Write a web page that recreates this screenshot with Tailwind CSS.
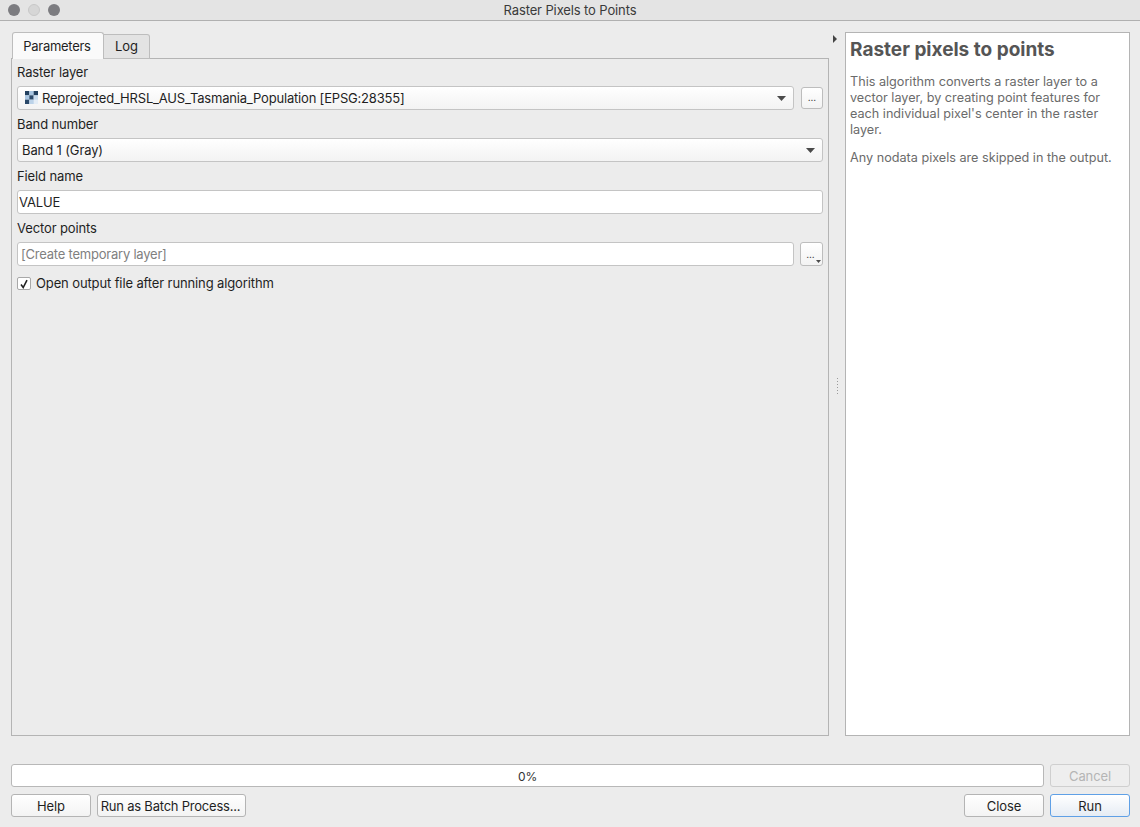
<!DOCTYPE html>
<html lang="en">
<head>
  <meta charset="UTF-8">
  <title>Raster Pixels to Points</title>
  <script src="https://cdn.jsdelivr.net/npm/@tailwindcss/browser@4"></script>
</head>
<body class="bg-[#ececec] text-[#1f1f1f] font-['Inter','Liberation_Sans',sans-serif] text-[13px] tracking-[-0.12px] leading-none overflow-hidden">
  <div class="w-[1140px] h-[827px] flex flex-col">

    <!-- Title bar -->
    <header class="relative h-[21px] shrink-0 bg-[#e4e4e4] border-b border-[#b0b0b0] flex items-center justify-center text-[#3a3a3a]">
      <div class="absolute left-[8px] top-[4px] flex gap-[8px]">
        <span class="w-[12px] h-[12px] rounded-full bg-[#7c7c80]"></span>
        <span class="w-[12px] h-[12px] rounded-full bg-[#d6d6d6] border border-[#c8c8c8]"></span>
        <span class="w-[12px] h-[12px] rounded-full bg-[#7c7c80]"></span>
      </div>
      Raster Pixels to Points
    </header>

    <!-- Main area -->
    <main class="flex pl-[11px] pt-[11px] h-[715px] shrink-0">
      <section class="w-[818px] flex flex-col">
        <!-- Tabs -->
        <div class="flex items-end h-[27px] pl-px relative z-10 -mb-px">
          <div class="w-[92px] h-[27px] bg-[#fafafa] border border-b-0 border-[#bdbdbd] rounded-t-[3px] flex items-center justify-center tracking-[-0.28px] pr-[2px]">Parameters</div>
          <div class="w-[46px] h-[25px] bg-[#e3e3e3] border border-l-0 border-[#bdbdbd] rounded-tr-[3px] flex items-center justify-center">Log</div>
        </div>
        <!-- Parameters pane -->
        <div class="h-[678px] border border-[#b4b4b4] px-[5px]">
          <label class="h-[27px] flex items-center">Raster layer</label>
          <div class="flex items-center justify-between">
            <div class="w-[777px] h-[24px] rounded-[3px] border border-[#c4c4c4] bg-gradient-to-b from-white to-[#f3f3f3] flex items-center pl-[7px] pr-[6px]">
              <svg class="w-[13px] h-[13px] mr-[4px] mb-[1px] shrink-0" viewBox="0 0 3 3">
                <rect width="3" height="3" fill="#e4edf6"/>
                <rect width="1" height="1" fill="#22405f"/>
                <rect x="1" width="1" height="1" fill="#a9c6e2"/>
                <rect x="2" width="1" height="1" fill="#22405f"/>
                <rect y="1" width="1" height="1" fill="#a9c6e2"/>
                <rect x="1" y="1" width="1" height="1" fill="#2c4a6b"/>
                <rect x="2" y="1" width="1" height="1" fill="#c9dcee"/>
                <rect y="2" width="1" height="1" fill="#2a4869"/>
                <rect x="1" y="2" width="1" height="1" fill="#bcd3e9"/>
              </svg>
              <span class="flex-1 tracking-[-0.19px]">Reprojected_HRSL_AUS_Tasmania_Population [EPSG:28355]</span>
              <svg class="w-[9px] h-[5px] mr-[1px]" viewBox="0 0 9 5"><path d="M0 0h9L4.500 5z" fill="#4a4a4a"/></svg>
            </div>
            <button class="w-[22px] h-[22px] rounded-[3px] border border-[#bdbdbd] bg-gradient-to-b from-white to-[#f3f3f3] text-[10px] pb-[2px]">...</button>
          </div>

          <label class="h-[28px] flex items-center">Band number</label>
          <div class="h-[24px] rounded-[3px] border border-[#c4c4c4] bg-gradient-to-b from-white to-[#f3f3f3] flex items-center justify-between pl-[4px] pr-[6px]">
            <span>Band 1 (Gray)</span>
            <svg class="w-[9px] h-[5px] mr-[1px]" viewBox="0 0 9 5"><path d="M0 0h9L4.500 5z" fill="#4a4a4a"/></svg>
          </div>

          <label class="h-[28px] flex items-center">Field name</label>
          <div class="h-[24px] rounded-[3px] border border-[#c4c4c4] bg-white flex items-center pl-[1px]">VALUE</div>

          <label class="h-[28px] flex items-center">Vector points</label>
          <div class="flex items-center justify-between">
            <div class="w-[777px] h-[24px] rounded-[3px] border border-[#c4c4c4] bg-white flex items-center pl-[3px] text-[#808080] tracking-[-0.22px]">[Create temporary layer]</div>
            <button class="relative w-[23px] h-[24px] rounded-[3px] border border-[#bdbdbd] bg-gradient-to-b from-white to-[#f3f3f3] text-[10px] pb-[1px] pr-[2px]">
              ...
              <svg class="absolute right-[1px] bottom-[2px] w-[5px] h-[3px]" viewBox="0 0 5 3"><path d="M0 0h5L2.500 3z" fill="#4a4a4a"/></svg>
            </button>
          </div>

          <div class="flex items-center mt-[11px] h-[13px]">
            <span class="w-[14px] h-[13px] rounded-[2px] border border-[#a8a8a8] bg-white flex items-center justify-center mr-[5px]">
              <svg class="w-[10px] h-[10px]" viewBox="0 0 10 10"><path d="M2 5.500 4.200 8.500 8 1.200" fill="none" stroke="#222" stroke-width="1.600"/></svg>
            </span>
            Open output file after running algorithm
          </div>
        </div>
      </section>

      <!-- Splitter -->
      <div class="relative w-[16px] shrink-0">
        <svg class="absolute left-[4px] top-[3px] w-[4px] h-[8px]" viewBox="0 0 4 8"><path d="M0 0l4 4-4 4z" fill="#444"/></svg>
        <div class="absolute left-[8px] top-[346px] flex flex-col gap-[2px]">
          <span class="w-px h-px bg-[#9a9a9a]"></span><span class="w-px h-px bg-[#9a9a9a]"></span><span class="w-px h-px bg-[#9a9a9a]"></span>
          <span class="w-px h-px bg-[#9a9a9a]"></span><span class="w-px h-px bg-[#9a9a9a]"></span><span class="w-px h-px bg-[#9a9a9a]"></span>
        </div>
      </div>

      <!-- Help panel -->
      <aside class="w-[285px] h-[704px] bg-white border border-[#b4b4b4] px-[4px] text-[#6b6b6b] tracking-normal">
        <h1 class="text-[19px] leading-[22px] font-bold text-[#555555] mt-[6px]">Raster pixels to points</h1>
        <p class="mt-[13px] text-[12.650px] leading-[16px]">This algorithm converts a raster layer to a vector layer, by creating point features for each individual pixel's center in the raster layer.</p>
        <p class="mt-[12px] text-[12.650px] leading-[16px]">Any nodata pixels are skipped in the output.</p>
      </aside>
    </main>

    <!-- Progress -->
    <div class="flex justify-between pl-[11px] pr-[10px] mt-[28px]">
      <div class="w-[1033px] h-[23px] bg-white border border-[#b8b8b8] rounded-[3px] flex items-center justify-center text-[12px] text-[#333] pt-[2px]">0%</div>
      <button class="w-[80px] h-[23px] border border-[#cfcfcf] rounded-[3px] bg-[#eeeeee] text-[#b5b5b5] pt-[2px]">Cancel</button>
    </div>

    <!-- Buttons -->
    <footer class="flex pl-[11px] pr-[10px] mt-[7px]">
      <button class="w-[80px] h-[23px] border border-[#b4b4b4] rounded-[3px] bg-gradient-to-b from-white to-[#f3f3f3] pt-[2px]">Help</button>
      <button class="w-[149px] h-[23px] border border-[#b4b4b4] rounded-[3px] bg-gradient-to-b from-white to-[#f3f3f3] ml-[6px] tracking-[-0.22px] pt-[2px] pr-[2px]">Run as Batch Process...</button>
      <button class="w-[80px] h-[23px] border border-[#b4b4b4] rounded-[3px] bg-gradient-to-b from-white to-[#f3f3f3] ml-auto pt-[2px]">Close</button>
      <button class="w-[80px] h-[23px] border border-[#5fa0e6] rounded-[3px] bg-gradient-to-b from-white to-[#e6ecf4] ml-[6px] pt-[2px]">Run</button>
    </footer>
  </div>
</body>
</html>
